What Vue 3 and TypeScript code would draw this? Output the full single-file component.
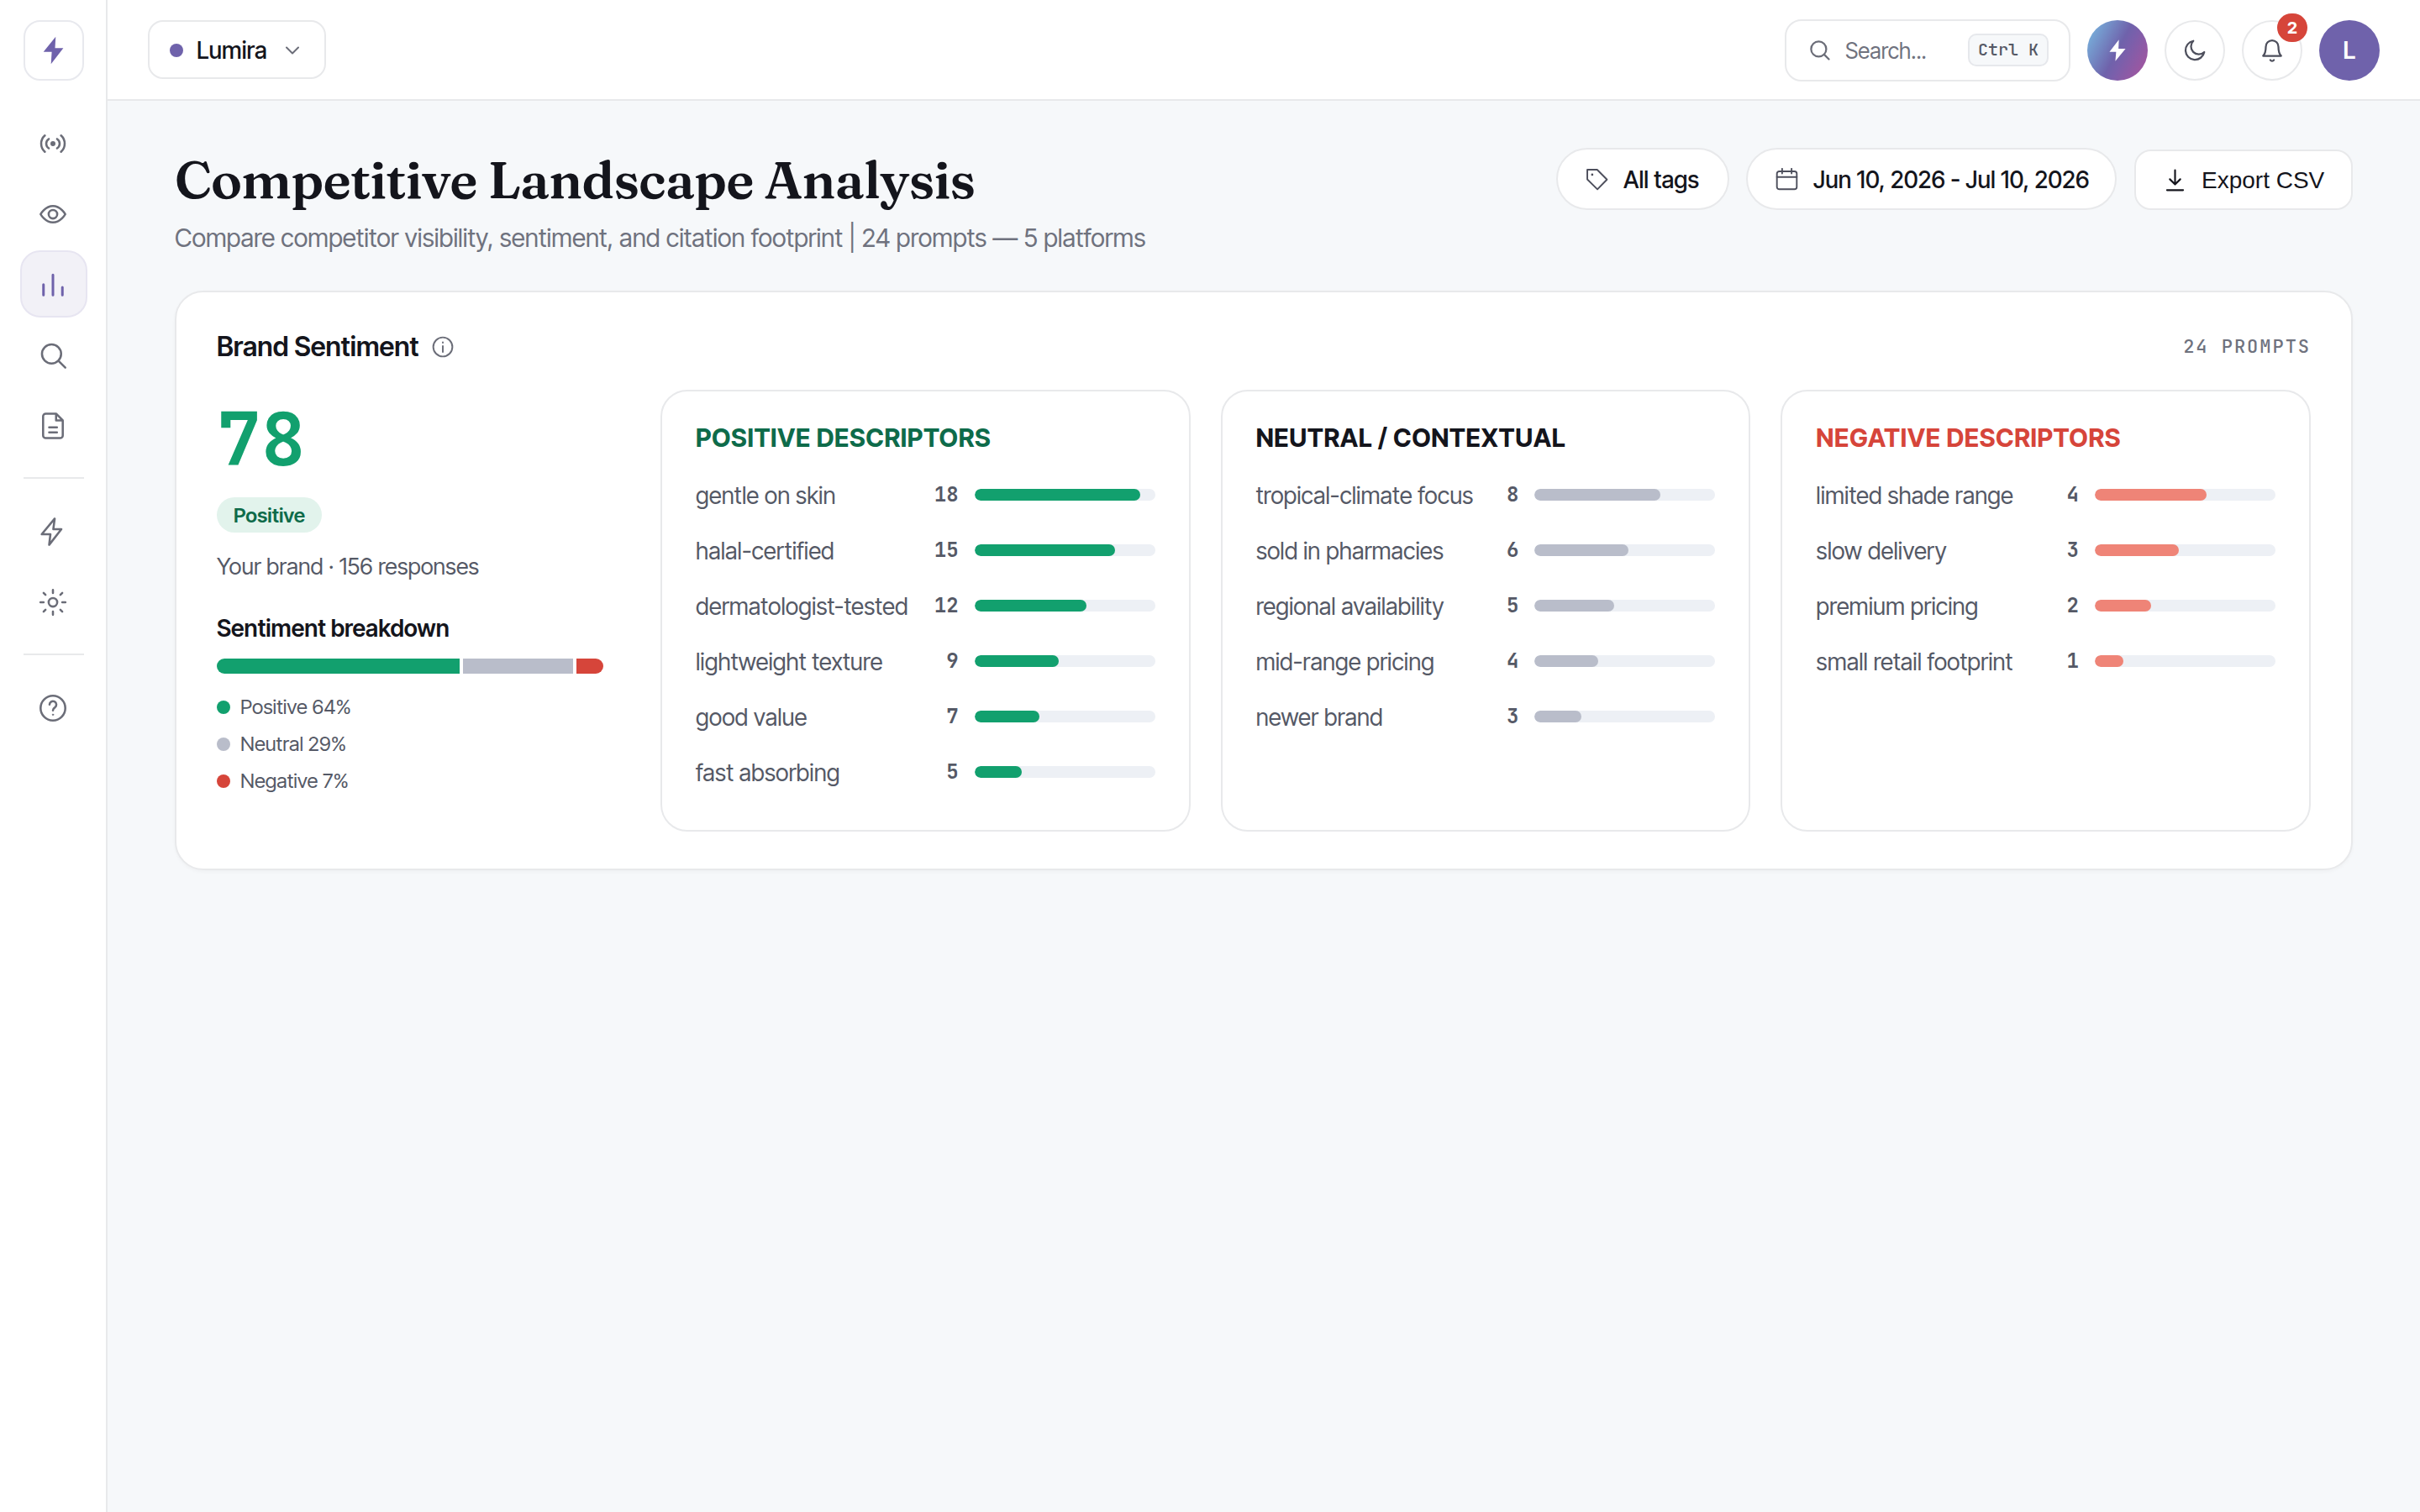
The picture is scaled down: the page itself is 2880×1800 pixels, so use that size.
<script setup lang="ts">
interface Descriptor {
  label: string
  count: number
  width: number
}
interface Group {
  title: string
  tone: 'positive' | 'neutral' | 'negative'
  items: Descriptor[]
}

const groups: Group[] = [
  {
    title: 'POSITIVE DESCRIPTORS',
    tone: 'positive',
    items: [
      { label: 'gentle on skin', count: 18, width: 92 },
      { label: 'halal-certified', count: 15, width: 78 },
      { label: 'dermatologist-tested', count: 12, width: 62 },
      { label: 'lightweight texture', count: 9, width: 46.5 },
      { label: 'good value', count: 7, width: 36 },
      { label: 'fast absorbing', count: 5, width: 26 },
    ],
  },
  {
    title: 'NEUTRAL / CONTEXTUAL',
    tone: 'neutral',
    items: [
      { label: 'tropical-climate focus', count: 8, width: 69.5 },
      { label: 'sold in pharmacies', count: 6, width: 52 },
      { label: 'regional availability', count: 5, width: 44 },
      { label: 'mid-range pricing', count: 4, width: 35 },
      { label: 'newer brand', count: 3, width: 26 },
    ],
  },
  {
    title: 'NEGATIVE DESCRIPTORS',
    tone: 'negative',
    items: [
      { label: 'limited shade range', count: 4, width: 62 },
      { label: 'slow delivery', count: 3, width: 46.5 },
      { label: 'premium pricing', count: 2, width: 31 },
      { label: 'small retail footprint', count: 1, width: 16 },
    ],
  },
]

const breakdown = [
  { label: 'Positive', share: 64, tone: 'positive' },
  { label: 'Neutral', share: 29, tone: 'neutral' },
  { label: 'Negative', share: 7, tone: 'negative' },
]
</script>

<template>
  <div class="app">
    <aside class="sidebar">
      <div class="logo">
        <svg viewBox="0 0 24 24" width="36" height="36"><path d="M13.500 1.200 3.800 13.200h6.600L9.800 22.800 19.600 10.200h-6.600z" fill="currentColor" /></svg>
      </div>
      <nav class="nav">
        <a class="item">
          <svg class="ico" viewBox="0 0 24 24">
            <circle cx="12" cy="12" r="1.500" fill="currentColor" stroke-width="1" />
            <path d="M8.700 8.300a4.400 4.400 0 0 0 0 7.400M15.300 8.300a4.400 4.400 0 0 1 0 7.400M5.600 5.500a8.700 8.700 0 0 0 0 13M18.400 5.500a8.700 8.700 0 0 1 0 13" />
          </svg>
        </a>
        <a class="item">
          <svg class="ico" viewBox="0 0 24 24"><path d="M2.200 12s3.600-6.500 9.800-6.500S21.800 12 21.800 12s-3.600 6.500-9.800 6.500S2.200 12 2.200 12z" /><circle cx="12" cy="12" r="3.400" /></svg>
        </a>
        <a class="item active">
          <svg class="ico" viewBox="0 0 24 24"><path d="M4.500 20.200v-8.300M12 20.200V4.200M19.500 20.200v-6.200" /></svg>
        </a>
        <a class="item">
          <svg class="ico" viewBox="0 0 24 24"><circle cx="10.900" cy="10.900" r="7.600" /><path d="m16.400 16.400 5.400 5.400" /></svg>
        </a>
        <a class="item">
          <svg class="ico" viewBox="0 0 24 24"><path d="M14.500 2.300H6.300a2.100 2.100 0 0 0-2.100 2.100v15.200a2.100 2.100 0 0 0 2.100 2.100h11.400a2.100 2.100 0 0 0 2.100-2.100V7.600zM14.500 2.300v5.300h5.300M9 13.100h6.200M9 17.100h6.200" /></svg>
        </a>
        <span class="divider"></span>
        <a class="item">
          <svg class="ico" viewBox="0 0 24 24"><path d="M13.400 1.600 3.100 14h6.900L9 22.400 18.700 10h-6.400z" /></svg>
        </a>
        <a class="item">
          <svg class="ico" viewBox="0 0 24 24"><circle cx="12" cy="12" r="3.400" /><path d="M12 2.100v2.500M12 19.400v2.500M2.100 12h2.500M19.400 12h2.500M4.600 4.600l1.500 1.500M17.900 17.900l1.500 1.500M4.600 19.400l1.500-1.500M17.900 6.100l1.500-1.500" /></svg>
        </a>
        <span class="divider"></span>
        <a class="item">
          <svg class="ico" viewBox="0 0 24 24"><circle cx="12" cy="12" r="9.800" /><path d="M9.300 9.200a2.700 2.700 0 1 1 4.300 2.200c-1 .7-1.600 1.200-1.600 2.400" /><circle cx="12" cy="17.200" r=".5" fill="currentColor" stroke-width=".6" /></svg>
        </a>
      </nav>
    </aside>

    <div class="page">
      <header class="topbar">
        <div class="brand">
          <span class="brand-dot"></span>
          <span class="brand-name">Lumira</span>
          <svg class="chev" viewBox="0 0 24 24"><path d="m5 8.500 7 7 7-7" /></svg>
        </div>
        <div class="tools">
          <div class="search">
            <svg class="search-ico" viewBox="0 0 24 24"><circle cx="11" cy="11" r="8" /><path d="m17 17 4.800 4.800" /></svg>
            <span class="search-text">Search...</span>
            <kbd class="kbd">Ctrl K</kbd>
          </div>
          <div class="round gradient">
            <svg viewBox="0 0 24 24" width="28" height="28"><path d="M13.400 1 3.800 13.500h6.800L9.800 23 20.200 10.200h-7.200z" fill="#fff" /></svg>
          </div>
          <div class="round outlined">
            <svg class="tool-ico" viewBox="0 0 24 24"><path d="M21 13.600A9 9 0 1 1 10.600 3 7.200 7.200 0 0 0 21 13.600z" /></svg>
          </div>
          <div class="round outlined bell">
            <svg class="tool-ico" viewBox="0 0 24 24"><path d="M18 8.500a6 6 0 0 0-12 0c0 6-2.600 8.700-2.600 8.700h17.200S18 14.500 18 8.500zM10.300 21.200a2 2 0 0 0 3.400 0" /></svg>
            <span class="badge">2</span>
          </div>
          <div class="round avatar">L</div>
        </div>
      </header>

      <main class="main">
        <div class="heading">
          <div>
            <h1 class="title">Competitive Landscape Analysis</h1>
            <p class="subtitle">Compare competitor visibility, sentiment, and citation footprint | 24 prompts — 5 platforms</p>
          </div>
          <div class="actions">
            <div class="pill tags">
              <svg class="act-ico" viewBox="0 0 24 24"><path d="M1.800 1.800h10.400L22.600 12.200 12.500 22.600 1.800 12z" /><circle cx="7" cy="7" r=".7" fill="currentColor" stroke-width="1" /></svg>
              <span>All tags</span>
            </div>
            <div class="pill dates">
              <svg class="act-ico" viewBox="0 0 24 24"><rect x="1.500" y="3.500" width="21" height="19" rx="2.500" /><path d="M1.500 9.500h21M7 .8v5M17 .8v5" /></svg>
              <span>Jun 10, 2026 - Jul 10, 2026</span>
            </div>
            <div class="export">
              <svg class="dl-ico" viewBox="0 0 24 24"><path d="M12 1.500v15M6.500 11l5.500 5.500 5.500-5.500M3.500 22.500h17" /></svg>
              <span>Export CSV</span>
            </div>
          </div>
        </div>

        <section class="card">
          <div class="card-head">
            <h2 class="card-title">Brand Sentiment</h2>
            <svg class="info" viewBox="0 0 24 24"><circle cx="12" cy="12" r="10.500" /><path d="M12 11v6.500" /><path d="M12 7v.4" /></svg>
            <span class="prompt-count">24 PROMPTS</span>
          </div>
          <div class="card-body">
            <div class="summary">
              <div class="score">78</div>
              <span class="tag">Positive</span>
              <p class="responses">Your brand · 156 responses</p>
              <h3 class="sub">Sentiment breakdown</h3>
              <div class="stack">
                <span v-for="b in breakdown" :key="b.label" :class="['seg', b.tone]" :style="{ flexGrow: b.share }"></span>
              </div>
              <ul class="legend">
                <li v-for="b in breakdown" :key="b.label"><i :class="['dot', b.tone]"></i>{{ b.label }} {{ b.share }}%</li>
              </ul>
            </div>
            <div class="groups">
              <div v-for="g in groups" :key="g.title" :class="['group', g.tone]">
                <h3 class="group-title">{{ g.title }}</h3>
                <div v-for="d in g.items" :key="d.label" class="row">
                  <span class="label">{{ d.label }}</span>
                  <span class="count">{{ d.count }}</span>
                  <span class="track"><span class="fill" :style="{ width: d.width + '%' }"></span></span>
                </div>
              </div>
            </div>
          </div>
        </section>
      </main>
    </div>
  </div>
</template>

<style>
html,
body {
  margin: 0;
  background: #f6f8fa;
}
</style>

<style scoped>
* {
  box-sizing: border-box;
}
h1,
h2,
h3,
p,
ul {
  margin: 0;
  padding: 0;
}
svg {
  display: block;
  flex: none;
}
.app {
  display: flex;
  height: 1800px;
  overflow: hidden;
  background: #f6f8fa;
  color: #14151c;
  font-family: 'Inter Tight', Inter, 'Liberation Sans', sans-serif;
  font-size: 28px;
  letter-spacing: 0;
  white-space: nowrap;
}
.sidebar {
  width: 128px;
  flex: none;
  background: #fff;
  border-right: 2px solid #e8e9eb;
  padding: 24px 0 0 24px;
}
.logo {
  width: 72px;
  height: 72px;
  margin-left: 4px;
  border: 2px solid #e8e9ee;
  border-radius: 20px;
  color: #6f62ab;
  display: flex;
  align-items: center;
  justify-content: center;
}
.nav {
  margin-top: 34px;
  display: flex;
  flex-direction: column;
  gap: 4px;
}
.item {
  width: 80px;
  height: 80px;
  border: 2px solid transparent;
  border-radius: 24px;
  color: #6b6d78;
  display: flex;
  align-items: center;
  justify-content: center;
  padding: 2px 2px 0 0;
}
.item.active {
  background: #f2f1f7;
  border-color: #e7e5f1;
  color: #6f62ab;
}
.ico {
  width: 36px;
  height: 36px;
  fill: none;
  stroke: currentColor;
  stroke-width: 1.700;
  stroke-linecap: round;
  stroke-linejoin: round;
}
.active .ico {
  stroke-width: 2;
}
.divider {
  width: 72px;
  height: 2px;
  margin: 18px 4px;
  background: #e8e9eb;
}
.page {
  flex: 1;
  min-width: 0;
}
.topbar {
  height: 120px;
  background: #fff;
  border-bottom: 2px solid #e8e9eb;
  padding: 0 48px;
  display: flex;
  align-items: center;
  justify-content: space-between;
}
.brand {
  width: 212px;
  height: 70px;
  border: 2px solid #e8e9eb;
  border-radius: 18px;
  padding: 2px 0 0 24px;
  display: flex;
  align-items: center;
  font-weight: 500;
}
.brand-dot {
  width: 16px;
  height: 16px;
  margin-right: 16px;
  border-radius: 50%;
  background: #6f62ab;
}
.brand-name {
  width: 102px;
}
.chev {
  width: 24px;
  height: 24px;
  fill: none;
  stroke: #6b6d78;
  stroke-width: 2;
  stroke-linecap: round;
  stroke-linejoin: round;
}
.tools {
  display: flex;
  align-items: center;
  gap: 20px;
  padding-top: 1px;
}
.search {
  width: 340px;
  height: 74px;
  border: 2px solid #e8e9eb;
  border-radius: 20px;
  padding: 0 24px 0 26px;
  display: flex;
  align-items: center;
}
.search-ico {
  width: 27px;
  height: 27px;
  margin-right: 17px;
  fill: none;
  stroke: #6b6d78;
  stroke-width: 2;
  stroke-linecap: round;
}
.search-text {
  flex: 1;
  padding-top: 2px;
  font-size: 26px;
  color: #6f727e;
}
.kbd {
  width: 96px;
  height: 39px;
  border: 2px solid #e6e8ec;
  border-radius: 10px;
  background: #f6f8fa;
  color: #555966;
  font: 500 20px/34px 'JetBrains Mono', 'DejaVu Sans Mono', monospace;
  letter-spacing: 0;
  text-align: center;
}
.round {
  width: 72px;
  height: 72px;
  border-radius: 50%;
  display: flex;
  align-items: center;
  justify-content: center;
}
.outlined {
  border: 2px solid #e8e9eb;
  color: #4d4f5c;
}
.gradient {
  background: linear-gradient(118deg, #78b4de 6%, #6f62ab 50%, #7a5fab 60%, #a056a0 90%);
}
.tool-ico {
  width: 30px;
  height: 30px;
  fill: none;
  stroke: currentColor;
  stroke-width: 1.800;
  stroke-linecap: round;
  stroke-linejoin: round;
}
.bell {
  position: relative;
}
.badge {
  position: absolute;
  top: -10px;
  right: -8px;
  width: 36px;
  height: 34px;
  border-radius: 17px;
  background: #d6453a;
  color: #fff;
  font-size: 20px;
  font-weight: 700;
  line-height: 34px;
  text-align: center;
}
.avatar {
  background: #6f62ab;
  color: #fff;
  font-weight: 600;
}
.main {
  padding: 56px 80px 0;
}
.heading {
  display: flex;
  justify-content: space-between;
  align-items: flex-start;
  height: 170px;
}
.title {
  margin-top: 2px;
  font: 600 62px/72px Fraunces, 'Liberation Serif', serif;
  letter-spacing: -0.0125em;
}
.subtitle {
  margin-top: 13px;
  font-size: 30px;
  line-height: 40px;
  color: #6f727e;
}
.actions {
  display: flex;
  align-items: flex-end;
}
.actions span {
  padding-top: 2px;
}
.pill {
  height: 74px;
  border: 2px solid #e8e9eb;
  border-radius: 37px;
  background: #fff;
  display: flex;
  align-items: center;
  font-weight: 500;
}
.tags {
  width: 206px;
  padding-left: 33px;
  margin-right: 20px;
}
.dates {
  width: 441px;
  padding-left: 33px;
  margin-right: 21px;
}
.act-ico,
.dl-ico {
  width: 27px;
  height: 27px;
  margin-right: 18px;
  fill: none;
  stroke: #4d4f5c;
  stroke-width: 1.700;
  stroke-linecap: round;
  stroke-linejoin: round;
}
.export {
  width: 260px;
  height: 72px;
  border: 2px solid #e8e9eb;
  border-radius: 20px;
  background: #fff;
  padding-left: 33px;
  display: flex;
  align-items: center;
  font-family: 'Liberation Sans', Arial, sans-serif;
  letter-spacing: 0;
}
.dl-ico {
  stroke: #14151c;
  stroke-width: 1.900;
}
.card {
  height: 690px;
  border: 2px solid #e8e9eb;
  border-radius: 34px;
  background: #fff;
  padding: 48px;
  box-shadow: 0 2px 4px rgba(20, 21, 28, 0.03);
}
.card-head {
  height: 34px;
  display: flex;
  align-items: center;
}
.card-title {
  font-size: 32px;
  font-weight: 600;
  line-height: 34px;
}
.info {
  width: 26px;
  height: 26px;
  margin-left: 15px;
  fill: none;
  stroke: #6b6d78;
  stroke-width: 1.800;
  stroke-linecap: round;
}
.prompt-count {
  margin-left: auto;
  color: #6f727e;
  font: 500 22px/32px 'JetBrains Mono', 'DejaVu Sans Mono', monospace;
  letter-spacing: 0.09em;
}
.card-body {
  margin-top: 34px;
  display: flex;
}
.summary {
  width: 460px;
  margin-right: 68px;
  padding-top: 14px;
  display: flex;
  flex-direction: column;
  align-items: flex-start;
}
.score {
  height: 88px;
  color: #12a06e;
  font: 700 88px/88px 'JetBrains Mono', 'DejaVu Sans Mono', monospace;
  letter-spacing: 0;
}
.tag {
  height: 42px;
  margin-top: 26px;
  padding: 0 20px;
  border-radius: 21px;
  background: #e2f3ec;
  color: #0e6b4a;
  font-size: 24px;
  font-weight: 600;
  line-height: 43px;
}
.responses {
  margin-top: 21px;
  font-size: 27px;
  line-height: 40px;
  color: #555966;
}
.sub {
  margin-top: 35px;
  font-size: 28px;
  font-weight: 600;
  line-height: 36px;
}
.stack {
  width: 460px;
  height: 18px;
  margin-top: 18px;
  border-radius: 9px;
  overflow: hidden;
  display: flex;
  gap: 4px;
}
.seg {
  flex-basis: 0;
}
.seg.positive,
.dot.positive {
  background: #12a06e;
}
.seg.neutral,
.dot.neutral {
  background: #b9bdca;
}
.seg.negative,
.dot.negative {
  background: #d6453a;
}
.legend {
  margin-top: 24px;
  list-style: none;
  display: flex;
  flex-direction: column;
  gap: 12px;
  font-size: 24px;
  line-height: 32px;
  color: #555966;
}
.legend li {
  display: flex;
  align-items: center;
}
.dot {
  width: 16px;
  height: 16px;
  margin-right: 12px;
  border-radius: 50%;
}
.groups {
  flex: 1;
  display: grid;
  grid-template-columns: repeat(3, 1fr);
  gap: 36px;
}
.group {
  height: 526px;
  border: 2px solid #e8e9eb;
  border-radius: 32px;
  padding: 36px 40px 0;
}
.group-title {
  margin-bottom: 16px;
  font-size: 30px;
  font-weight: 700;
  line-height: 38px;
  letter-spacing: 0.02em;
}
.positive .group-title {
  color: #0e6b4a;
}
.negative .group-title {
  color: #d6453a;
}
.row {
  height: 66px;
  display: flex;
  align-items: center;
}
.label {
  flex: 1;
  padding-top: 2px;
  color: #555966;
}
.count {
  margin-right: 19px;
  color: #555966;
  font: 600 24px/32px 'JetBrains Mono', 'DejaVu Sans Mono', monospace;
  letter-spacing: 0;
}
.track {
  width: 215px;
  height: 14px;
  border-radius: 7px;
  background: #edf0f5;
  overflow: hidden;
}
.fill {
  display: block;
  height: 14px;
  border-radius: 7px;
}
.positive .fill {
  background: #12a06e;
}
.neutral .fill {
  background: #b9bdca;
}
.negative .fill {
  background: #ef8477;
}
</style>
